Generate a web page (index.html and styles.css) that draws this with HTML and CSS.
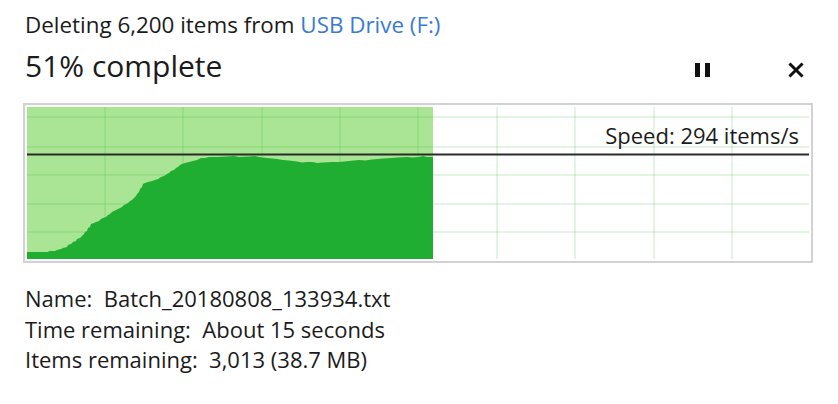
FILE: index.html
```html
<!DOCTYPE html>
<html lang="en">
<head>
<meta charset="utf-8">
<title>Deleting</title>
<link rel="stylesheet" href="styles.css">
</head>
<body>
<div class="dialog">
  <div class="subtitle">Deleting 6,200 items from <span class="link">USB Drive (F:)</span></div>
  <div class="head-row">
    <div class="title">51% complete</div>
    <div class="controls">
      <button class="btn pause" aria-label="Pause">
        <svg width="16" height="16" viewBox="0 0 16 16"><rect x="0" y="1" width="5" height="14" fill="#111"/><rect x="10" y="1" width="5" height="14" fill="#111"/></svg>
      </button>
      <button class="btn close" aria-label="Cancel">
        <svg width="16" height="16" viewBox="0 0 16 16"><path d="M2.5 2.5 L13.5 13.5 M13.5 2.5 L2.5 13.5" stroke="#111" stroke-width="3" stroke-linecap="square"/></svg>
      </button>
    </div>
  </div>
  <div class="chart">
    <svg class="graph" width="782" height="152" viewBox="0 0 782 152">
      <rect x="0" y="0" width="406" height="152" fill="#aae495"/>
      <g stroke="rgba(60,190,60,0.2)" stroke-width="1.5">
        <line x1="78" y1="0" x2="78" y2="152"/>
        <line x1="156" y1="0" x2="156" y2="152"/>
        <line x1="235" y1="0" x2="235" y2="152"/>
        <line x1="313" y1="0" x2="313" y2="152"/>
        <line x1="391" y1="0" x2="391" y2="152"/>
        <line x1="470" y1="0" x2="470" y2="152"/>
        <line x1="548" y1="0" x2="548" y2="152"/>
        <line x1="627" y1="0" x2="627" y2="152"/>
        <line x1="705" y1="0" x2="705" y2="152"/>
        <line x1="0" y1="10" x2="782" y2="10"/>
        <line x1="0" y1="40" x2="782" y2="40"/>
        <line x1="0" y1="68" x2="782" y2="68"/>
        <line x1="0" y1="97" x2="782" y2="97"/>
        <line x1="0" y1="125" x2="782" y2="125"/>
      </g>
      <polygon fill="#1fae32" points="0,152 0,145 21,145 22,144 28,144 30,143 34,142 36,141 40,140 41,138 44,137 46,135 49,134 50,132 53,131 55,129 57,127 58,125 60,124 61,121 63,120 64,117 67,116 69,115 72,114 74,112 76,111 79,110 81,108 83,107 85,105 87,104 89,103 91,102 93,101 95,100 97,98 99,97 101,96 103,94 105,93 107,91 109,89 110,87 112,85 113,82 115,80 116,77 118,76 121,75 125,74 128,73 131,72 134,70 137,69 140,67 142,66 144,64 147,63 149,61 151,60 153,58 155,57 158,56 162,55 166,54 170,53 174,51 178,51 182,50 190,50 200,49.5 207,49 212,50 222,49.5 228,49 232,50 240,51 250,52 256,53 262,53.5 270,54.5 275,55.5 280,55 286,55 290,56 296,55.5 305,55 312,55 322,54 332,53 338,53.5 345,52.5 356,51.5 364,51 370,50.5 380,50 385,50.5 392,50 396,49 400,50 406,50 406,152"/>
      <rect x="0" y="46.5" width="782" height="2" fill="#2b2b2b"/>
    </svg>
    <div class="speed">Speed: 294 items/s</div>
  </div>
  <div class="details">
    <div>Name:&nbsp; Batch_20180808_133934.txt</div>
    <div>Time remaining:&nbsp; About 15 seconds</div>
    <div>Items remaining:&nbsp; 3,013 (38.7 MB)</div>
  </div>
</div>
</body>
</html>
```

FILE: styles.css
```css
html, body {
  margin: 0;
  padding: 0;
  background: #ffffff;
}

.dialog {
  width: 838px;
  height: 404px;
  box-sizing: border-box;
  padding: 9.5px 0 0 25px;
  font-family: "Open Sans", "Noto Sans", sans-serif;
  color: #1b1b1b;
}

.subtitle {
  font-size: 22.4px;
  line-height: 30px;
}

.link {
  color: #3a7bd5;
}

.head-row {
  display: flex;
  align-items: center;
  justify-content: space-between;
  width: 779px;
  margin-top: 6px;
}

.title {
  font-size: 30px;
  line-height: 40px;
}

.controls {
  display: flex;
  align-items: center;
  gap: 77px;
  padding-top: 8px;
}

.btn {
  border: 0;
  background: none;
  padding: 0;
  margin: 0;
  width: 16px;
  height: 16px;
  display: block;
}

.btn svg {
  display: block;
}

.chart {
  position: relative;
  margin-top: 17.6px;
  margin-left: -2px;
  border: 2px solid #d2d2d2;
  padding: 2px;
  box-sizing: content-box;
  width: 782px;
  height: 152px;
  background: #fff;
}

.graph {
  display: block;
}

.speed {
  position: absolute;
  right: 12px;
  top: 17.5px;
  font-size: 22px;
  line-height: 24px;
  color: #1b1b1b;
}

.details {
  margin-top: 20px;
  font-size: 22px;
  line-height: 30.5px;
}
```
